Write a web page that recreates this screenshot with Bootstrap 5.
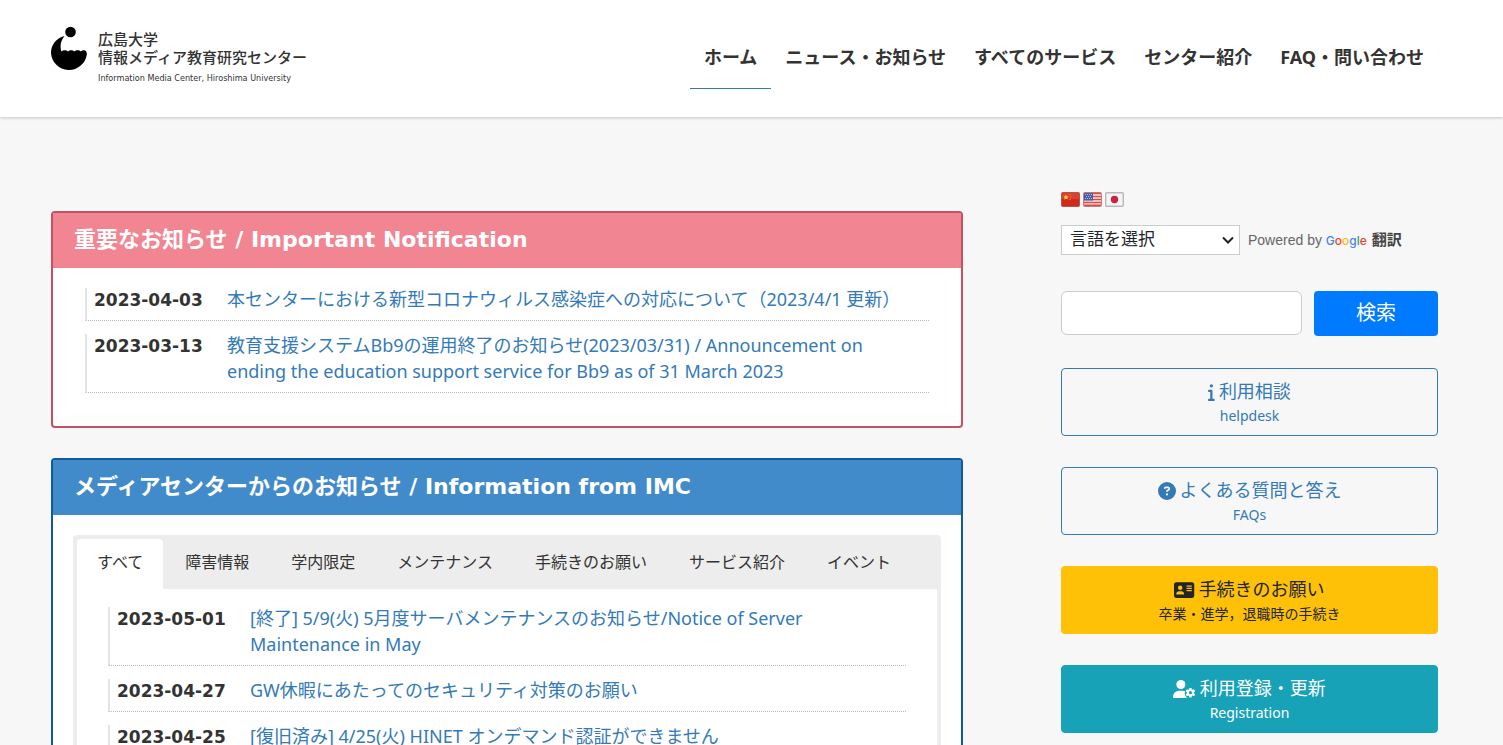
<!DOCTYPE html>
<html lang="ja">
<head>
<meta charset="utf-8">
<meta name="viewport" content="width=device-width, initial-scale=1">
<title>広島大学 情報メディア教育研究センター</title>
<link href="https://cdn.jsdelivr.net/npm/bootstrap@5.3.0/dist/css/bootstrap.min.css" rel="stylesheet">
<style>
  body { background: #f7f7f7; color: #333; font-family: "Noto Sans", "Noto Sans CJK JP", sans-serif; font-size: 18px; line-height: 26px; }
  a { color: #337ab7; text-decoration: none; }
  .page-width { padding: 0 65px 0 51px; }
  .site-header { background: #fff; min-height: 117px; box-shadow: 0 1px 3px rgba(0,0,0,.2); }
  .brand { color: #333; font-size: 15px; line-height: 18px; gap: 11px; padding-top: 26px; }
  .brand:hover { color: #333; }
  .brand-text { padding-top: 4px; font-weight: 500; }
  .brand-en { font-family: "DejaVu Sans Condensed", "DejaVu Sans", sans-serif; font-weight: 400; font-size: 9px; line-height: 25px; }
  .main-nav { padding-top: 26px; }
  .main-nav .nav-link { color: #333; font-weight: 700; padding: 18px 14px; border-bottom: 1px solid transparent; white-space: nowrap; }
  .main-nav .nav-link.active { border-color: #337ab7; }
  .layout { display: grid; grid-template-columns: 912fr 377fr; gap: 98px; padding-top: 75px; }
  .news-col { padding-top: 19px; }
  .panel { background: #fff; border: 2px solid; border-radius: 4px; margin-bottom: 30px; }
  .panel-red { border-color: #c05264; }
  .panel-blue { border-color: #0f5a9c; }
  .panel h2 { margin: 0; padding: 14px 21px 15px; color: #fff; font: 700 22px/26px "DejaVu Sans", "Noto Sans CJK JP", sans-serif; }
  .panel-red h2 { background: #f28592; }
  .panel-blue h2 { background: #428bca; }
  .news { margin: 20px 32px 33px; }
  .news li { display: flex; border-left: 2px solid #e4e4e4; border-bottom: 1px dotted #bbb; padding: 0 32px 8px 7px; margin-bottom: 13px; line-height: 26px; }
  .news li a { margin-top: -2px; }
  .news time { flex: 0 0 133px; font: 700 17px/24px "DejaVu Sans", sans-serif; }
  .tab-box { margin: 20px; border: solid #ededed; border-width: 0 4px; border-radius: 4px 4px 0 0; }
  .tab-strip { background: #ededed; padding-top: 4px; gap: 2px; font-size: 16px; }
  .tab-strip .nav-link { color: #333; line-height: 24px; padding: 11px 20px 15px; border-radius: 4px 4px 0 0; }
  .tab-strip .nav-link.active { background: #fff; }
  .tab-box .news { margin: 18px 31px; }
  .flags { gap: 3px; height: 15px; }
  .lang-row { margin-top: 18px; }
  .lang-select { width: 179px; height: 30px; border: 1px solid #ccc; padding: 0 8px 3px; font-size: 17px; line-height: 24px; border-radius: 0; background-color: #fff; background-image: url("data:image/svg+xml,%3Csvg xmlns='http://www.w3.org/2000/svg' viewBox='0 0 12 12'%3E%3Cpath d='M1 3.5l5 5 5-5' fill='none' stroke='%23222' stroke-width='2'/%3E%3C/svg%3E"); background-position: right 5px center; background-size: 12px; }
  .powered { color: #666; font: 14px/28px "Liberation Sans", sans-serif; margin-left: 8px; }
  .powered a { color: #444; font: 700 15px/28px "Noto Sans CJK JP", sans-serif; }
  .g-word { font: 500 12px/28px Inter, sans-serif; margin-right: 5px; }
  .g-b { color: #4285f4; } .g-r { color: #ea4335; } .g-y { color: #fbbc05; } .g-g { color: #34a853; }
  .search { gap: 12px; margin: 36px 0 32px; }
  .search input { height: 44px; border-color: #ccc; border-radius: 6px; }
  .search button { flex: 0 0 124px; height: 45px; background: #007bff; color: #fff; font-size: 20px; padding: 0 0 1px; border: 0; border-radius: 4px; }
  .side-btn { display: block; border: 1px solid #337ab7; border-radius: 4px; color: #337ab7; padding: 10px 12px 6px; line-height: 24px; margin-bottom: 31px; }
  .side-btn span { display: block; font-size: 14px; line-height: 26px; }
  .side-btn svg { height: 18px; vertical-align: -3px; margin-right: 4px; }
  .side-yellow { background: #ffc107; border-color: #ffc107; color: #212529; }
  .side-teal { background: #17a2b8; border-color: #17a2b8; color: #fff; }
</style>
</head>
<body>
<header class="site-header">
  <div class="page-width d-flex justify-content-between align-items-start">
    <a class="brand d-flex" href="#">
      <svg width="36" height="46" viewBox="0 0 36 46" aria-hidden="true"><circle cx="19.500" cy="6" r="5.300"/><path d="M13.500 10C5 12 0 19 0 27a18 18 0 0 0 35.800 1.500c.3-2.300-.8-4.300-3-4.300-1.400 0-2.300.6-3 1.400-1.200-1.700-4.900-1.900-6.500 0-1.600-1.900-4.900-1.700-6.300 0-1.500-1.600-4.600-1.900-6.700-.2-1.600-5.700-.5-11 3.200-15.400z"/></svg>
      <span class="brand-text"><span class="d-block">広島大学</span><span class="d-block">情報メディア教育研究センター</span><span class="brand-en d-block">Information Media Center, Hiroshima University</span></span>
    </a>
    <nav class="main-nav nav flex-nowrap">
      <a class="nav-link active" href="#">ホーム</a>
      <a class="nav-link" href="#">ニュース・お知らせ</a>
      <a class="nav-link" href="#">すべてのサービス</a>
      <a class="nav-link" href="#">センター紹介</a>
      <a class="nav-link" href="#">FAQ・問い合わせ</a>
    </nav>
  </div>
</header>

<div class="page-width layout">
  <main class="news-col">
    <section class="panel panel-red">
      <h2>重要なお知らせ / Important Notification</h2>
      <ul class="news list-unstyled">
        <li><time>2023-04-03</time><a href="#">本センターにおける新型コロナウィルス感染症への対応について（2023/4/1 更新）</a></li>
        <li><time>2023-03-13</time><a href="#">教育支援システムBb9の運用終了のお知らせ(2023/03/31) / Announcement on ending the education support service for Bb9 as of 31 March 2023</a></li>
      </ul>
    </section>
    <section class="panel panel-blue">
      <h2>メディアセンターからのお知らせ / Information from IMC</h2>
      <div class="tab-box">
        <nav class="nav tab-strip">
          <a class="nav-link active" href="#">すべて</a>
          <a class="nav-link" href="#">障害情報</a>
          <a class="nav-link" href="#">学内限定</a>
          <a class="nav-link" href="#">メンテナンス</a>
          <a class="nav-link" href="#">手続きのお願い</a>
          <a class="nav-link" href="#">サービス紹介</a>
          <a class="nav-link" href="#">イベント</a>
        </nav>
        <ul class="news list-unstyled">
          <li><time>2023-05-01</time><a href="#">[終了] 5/9(火) 5月度サーバメンテナンスのお知らせ/Notice of Server Maintenance in May</a></li>
          <li><time>2023-04-27</time><a href="#">GW休暇にあたってのセキュリティ対策のお願い</a></li>
          <li><time>2023-04-25</time><a href="#">[復旧済み] 4/25(火) HINET オンデマンド認証ができません</a></li>
        </ul>
      </div>
    </section>
  </main>

  <aside>
    <div class="flags d-flex">
      <a class="d-flex" href="#" aria-label="中文"><svg width="19" height="15" viewBox="0 0 19 15"><rect x=".5" y=".5" width="18" height="14" rx="1" fill="#cf2a1c" stroke="#b5564c"/><path d="M1 1h17v6H1z" fill="#e2513f" opacity=".6"/><path d="M5 2.500l.8 1.700 1.900.2-1.400 1.300.4 1.900L5 6.700l-1.700.9.4-1.900-1.400-1.300 1.900-.2z" fill="#f8d030"/><path d="M8.500 2h1v1h-1zM9.500 4.500h1v1h-1zM8.500 7h1v1h-1z" fill="#f0a030"/></svg></a>
      <a class="d-flex" href="#" aria-label="English"><svg width="19" height="15" viewBox="0 0 19 15"><rect x=".5" y=".5" width="18" height="14" rx="1" fill="#f5e6e6" stroke="#b9837f"/><path d="M1 1.500h17M1 4.500h17M1 7.500h17M1 10.500h17M1 13.200h17" stroke="#dc4a43" stroke-width="1.600"/><path d="M1 1h9v7.500H1z" fill="#4a5ba8"/><path d="M2 2.500h7M3 4.500h6M2 6.500h7" stroke="#b5bde0" stroke-dasharray="1 1"/></svg></a>
      <a class="d-flex" href="#" aria-label="日本語"><svg width="19" height="15" viewBox="0 0 19 15"><rect x=".7" y=".7" width="17.600" height="13.600" rx="1" fill="#f4f4f4" stroke="#b9b9b9" stroke-width="1.400"/><circle cx="9.500" cy="7.500" r="3.700" fill="#c92344"/></svg></a>
    </div>
    <div class="d-flex lang-row">
      <select class="form-select lang-select" aria-label="言語翻訳ウィジェット"><option>言語を選択</option></select>
      <div class="powered text-nowrap">Powered by <a href="#"><span class="g-word"><span class="g-b">G</span><span class="g-r">o</span><span class="g-y">o</span><span class="g-b">g</span><span class="g-g">l</span><span class="g-r">e</span></span>翻訳</a></div>
    </div>
    <form class="search d-flex">
      <input class="form-control" type="search" aria-label="検索キーワード">
      <button type="button" class="btn">検索</button>
    </form>
    <a class="side-btn text-center" href="#"><svg viewBox="0 0 192 512" fill="currentColor"><path d="M48 80a48 48 0 1 1 96 0A48 48 0 1 1 48 80zM0 224c0-17.700 14.300-32 32-32H96c17.700 0 32 14.300 32 32V448h32c17.700 0 32 14.300 32 32s-14.300 32-32 32H32c-17.700 0-32-14.300-32-32s14.300-32 32-32H64V256H32c-17.700 0-32-14.300-32-32z"/></svg>利用相談<span>helpdesk</span></a>
    <a class="side-btn text-center" href="#"><svg viewBox="0 0 512 512" fill="currentColor"><path d="M256 512A256 256 0 1 0 256 0a256 256 0 1 0 0 512zM169.800 165.300c7.900-22.300 29.100-37.300 52.800-37.300h58.300c34.900 0 63.100 28.300 63.100 63.100c0 22.600-12.100 43.500-31.700 54.800L280 264.400c-.2 13-10.900 23.600-24 23.600c-13.300 0-24-10.700-24-24V250.500c0-8.600 4.600-16.500 12.100-20.800l44.300-25.400c4.700-2.700 7.600-7.700 7.600-13.100c0-8.400-6.800-15.100-15.100-15.100H222.600c-3.400 0-6.400 2.100-7.500 5.300l-.4 1.200c-4.400 12.500-18.200 19-30.600 14.600s-19-18.200-14.600-30.600l.4-1.200zM224 352a32 32 0 1 1 64 0 32 32 0 1 1 -64 0z"/></svg>よくある質問と答え<span>FAQs</span></a>
    <a class="side-btn side-yellow text-center" href="#"><svg viewBox="0 0 576 512" fill="currentColor"><path d="M64 32C28.700 32 0 60.700 0 96V416c0 35.300 28.700 64 64 64H512c35.300 0 64-28.700 64-64V96c0-35.300-28.700-64-64-64H64zm80 256h64c44.200 0 80 35.800 80 80c0 8.800-7.200 16-16 16H80c-8.800 0-16-7.200-16-16c0-44.200 35.800-80 80-80zm-32-96a64 64 0 1 1 128 0 64 64 0 1 1 -128 0zm256-64H496c8.800 0 16 7.200 16 16s-7.200 16-16 16H368c-8.800 0-16-7.200-16-16s7.200-16 16-16zm0 64H496c8.800 0 16 7.200 16 16s-7.200 16-16 16H368c-8.800 0-16-7.200-16-16s7.200-16 16-16zm0 64H496c8.800 0 16 7.200 16 16s-7.200 16-16 16H368c-8.800 0-16-7.200-16-16s7.200-16 16-16z"/></svg>手続きのお願い<span>卒業・進学，退職時の手続き</span></a>
    <a class="side-btn side-teal text-center" href="#"><svg viewBox="0 0 640 512" fill="currentColor"><circle cx="224" cy="128" r="128"/><path d="M178 304h92c28 0 55 7 78 19-18 45-22 90 10 130 12 26 28 44 48 59H30c-16 0-30-14-30-30 0-98 80-178 178-178z"/><path fill-rule="evenodd" d="M466 224h60l8 44 22 12 42-15 32 54-34 30v26l34 30-32 54-42-15-22 12-8 44h-60l-8-44-22-12-42 15-32-54 34-30v-26l-34-30 32-54 42 15 22-12zM496 316a46 46 0 1 0 0 92 46 46 0 0 0 0-92z"/></svg>利用登録・更新<span>Registration</span></a>
  </aside>
</div>
<script src="https://cdn.jsdelivr.net/npm/bootstrap@5.3.0/dist/js/bootstrap.bundle.min.js"></script>
</body>
</html>
